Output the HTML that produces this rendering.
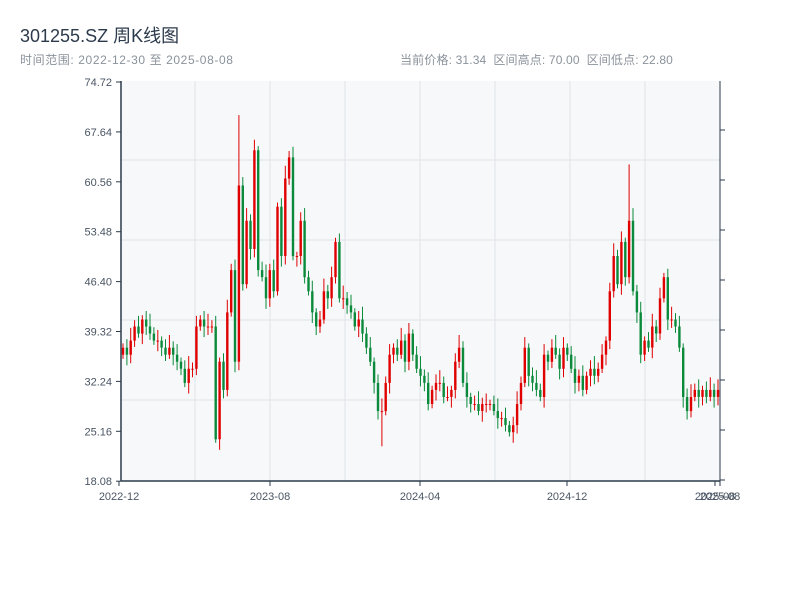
<!DOCTYPE html>
<html><head><meta charset="utf-8"><style>
body{margin:0;width:800px;height:600px;background:#fff;font-family:"Liberation Sans","Noto Sans CJK SC",sans-serif;position:relative;overflow:hidden}
.t{position:absolute;left:20px;top:22px;font-size:18px;color:#2c3a4b}
.s{position:absolute;top:51px;font-size:12px;color:#8a929b}
</style></head><body>
<div class="t">301255.SZ 周K线图</div>
<div class="s" style="left:20px;letter-spacing:0.6px">时间范围: 2022-12-30 至 2025-08-08</div>
<div class="s" style="left:400px;letter-spacing:0.15px">当前价格: 31.34&nbsp; 区间高点: 70.00&nbsp; 区间低点: 22.80</div>
<svg id="c" width="800" height="600" style="position:absolute;left:0;top:0" font-family="Liberation Sans, sans-serif"></svg>
<script>
var s=document.getElementById('c'),h='';
h+='<rect x="121" y="81" width="599" height="400" fill="#f6f8fa"/>';
[195,270,345,420,495,570,645].forEach(function(x){h+='<line x1="'+x+'" y1="81" x2="'+x+'" y2="481" stroke="#dfe3e8"/>'});
[160,240,320,400].forEach(function(y){h+='<line x1="121" y1="'+y+'" x2="720" y2="'+y+'" stroke="#dfe3e8"/>'});
function Y(p){return 481-(p-18.08)*7.048}
var c=[37,36,38,40,39,41,40,39,38,38,37,36,37,36,35,34,32,34,34,40,41,40,40,40,24,35,31,42,48,35,60,46,55,51,65,48,47,44,48,45,57,50,61,64,50,50,55,47,45,42,40,41,45,44,47,52,44,44,43,42,40,41,39,37,35,32,28,28,32,36,37,36,38,35,39,36,34,33,32,29,31,32,32,30,30,31,35,37,32,30,29,29,28,29,29,29,28,27,27,26,25,26,29,32,37,33,32,31,30,36,35,37,36,34,37,36,34,32,33,31,33,34,33,34,36,38,45,50,46,52,47,55,45,42,36,38,37,40,39,44,47,41,41,40,37,30,28,30,31,30,31,30,31,30,31];
var ex={24:23.5,30:70,67:23,131:63};
var n=c.length,o=36;
for(var i=0;i<n;i++){var x=123+i*(595/(n-1)),cl=c[i],hi=Math.max(o,cl)+0.6+((i*7)%5)*0.3,lo=Math.min(o,cl)-0.6-((i*3)%4)*0.3;
if(ex[i]){if(ex[i]>cl)hi=ex[i];else lo=ex[i];}
var col=cl>=o?'#e00000':'#0a8a3a';
h+='<line x1="'+x.toFixed(1)+'" y1="'+Y(hi).toFixed(1)+'" x2="'+x.toFixed(1)+'" y2="'+Y(lo).toFixed(1)+'" stroke="'+col+'" stroke-width="1"/>';
var t=Y(Math.max(o,cl)),b=Y(Math.min(o,cl));if(b-t<1)b=t+1;
h+='<rect x="'+(x-1.2).toFixed(1)+'" y="'+t.toFixed(1)+'" width="2.4" height="'+(b-t).toFixed(1)+'" fill="'+col+'"/>';o=cl;}
h+='<line x1="121" y1="81" x2="121" y2="481" stroke="#2c3a4b" stroke-width="1.5"/><line x1="121" y1="481" x2="720" y2="481" stroke="#2c3a4b" stroke-width="1.5"/><line x1="720" y1="81" x2="720" y2="481" stroke="#2c3a4b" stroke-width="1"/>';
['74.72','67.64','60.56','53.48','46.40','39.32','32.24','25.16','18.08'].forEach(function(l,i){var y=82+i*49.9;
h+='<line x1="116" y1="'+y+'" x2="121" y2="'+y+'" stroke="#2c3a4b"/><text x="112" y="'+(y+4)+'" font-size="11" fill="#4a5563" text-anchor="end">'+l+'</text>';});
[130,180,230,280,330,380,430,480].forEach(function(y){h+='<line x1="720" y1="'+y+'" x2="725" y2="'+y+'" stroke="#2c3a4b"/>'});
[[119,'2022-12'],[270,'2023-08'],[420,'2024-04'],[567,'2024-12'],[715,'2025-08'],[720,'2025-08']].forEach(function(a){
h+='<line x1="'+a[0]+'" y1="481" x2="'+a[0]+'" y2="486" stroke="#2c3a4b"/><text x="'+a[0]+'" y="500" font-size="11" fill="#4a5563" text-anchor="middle">'+a[1]+'</text>';});
s.innerHTML=h;
</script>
</body></html>
